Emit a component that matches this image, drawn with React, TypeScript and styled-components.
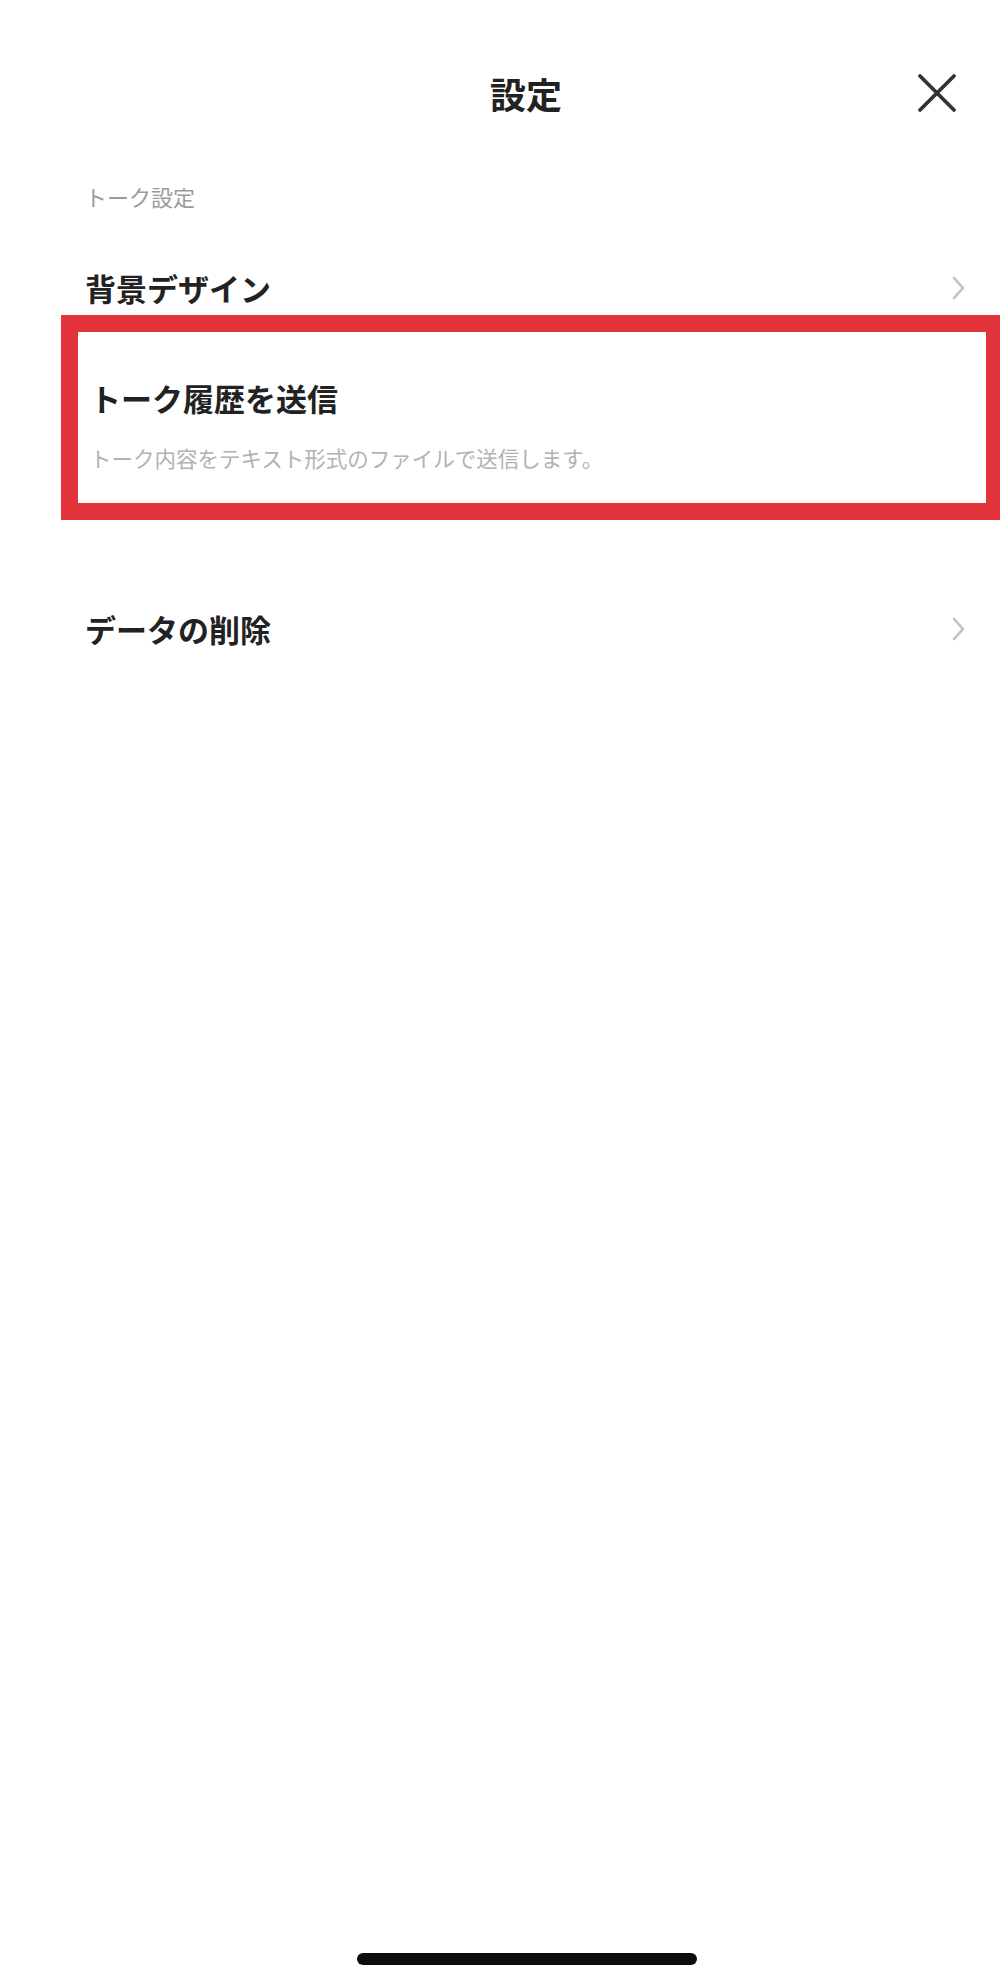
import React from "react";
import styled, { createGlobalStyle } from "styled-components";

const GlobalStyle = createGlobalStyle`
  html, body {
    margin: 0;
    padding: 0;
    background: #ffffff;
  }
  body {
    font-family: "Noto Sans CJK JP", "Noto Sans", sans-serif;
    color: #1f1f1f;
  }
`;

const Screen = styled.div`
  width: 1000px;
  height: 1983px;
  overflow: hidden;
  display: flex;
  flex-direction: column;
  background: #ffffff;
`;

const Header = styled.header`
  height: 186px;
  display: flex;
  align-items: center;
  padding: 0 43px 0 135px;
  box-sizing: border-box;
`;

const Title = styled.h1`
  flex: 1;
  margin: 0;
  text-align: center;
  font-size: 36px;
  font-weight: 700;
  line-height: 44px;
  color: #222222;
`;

const CloseButton = styled.button`
  width: 40px;
  height: 40px;
  padding: 0;
  border: none;
  background: transparent;
  display: flex;
  align-items: center;
  justify-content: center;
`;

const SectionLabel = styled.div`
  height: 20px;
  padding-left: 85px;
  font-size: 22px;
  line-height: 20px;
  color: #9a9a9a;
`;

const Row = styled.div<{ $top: number; $bottom?: number }>`
  margin-top: ${(p) => p.$top}px;
  height: 48px;
  margin-bottom: ${(p) => p.$bottom ?? 0}px;
  display: flex;
  align-items: center;
  justify-content: space-between;
  padding: 0 33px 0 85px;
  box-sizing: border-box;
`;

const RowLabel = styled.span`
  font-size: 31px;
  font-weight: 700;
  line-height: 40px;
  color: #222222;
`;

const Highlight = styled.div`
  margin-left: 61px;
  width: 942px;
  flex-shrink: 0;
  border: 17px solid #e3343b;
  box-sizing: border-box;
  padding: 46px 0 31px 12px;
  display: flex;
  flex-direction: column;
  gap: 26px;
`;

const HighlightTitle = styled.span`
  font-size: 31px;
  font-weight: 700;
  line-height: 40px;
  color: #222222;
`;

const HighlightDesc = styled.span`
  font-size: 21.5px;
  line-height: 28px;
  color: #b2b2b2;
  white-space: nowrap;
`;

const Spacer = styled.div`
  flex: 1;
`;

const HomeIndicator = styled.div`
  margin: 0 0 18px 357px;
  width: 340px;
  height: 12px;
  border-radius: 6px;
  background: #0d0d0d;
`;

const Chevron = () => (
  <svg width="18" height="30" viewBox="0 0 18 30" fill="none">
    <polyline
      points="5,5 14,15 5,25"
      stroke="#c0c0c0"
      strokeWidth="2.6"
      strokeLinecap="round"
      strokeLinejoin="round"
    />
  </svg>
);

const CloseIcon = () => (
  <svg width="40" height="40" viewBox="0 0 40 40" fill="none">
    <path
      d="M3 3 L37 37 M37 3 L3 37"
      stroke="#333333"
      strokeWidth="3.8"
      strokeLinecap="round"
    />
  </svg>
);

export default function App() {
  return (
    <>
      <GlobalStyle />
      <Screen>
        <Header>
          <Title>設定</Title>
          <CloseButton aria-label="閉じる">
            <CloseIcon />
          </CloseButton>
        </Header>
        <SectionLabel>トーク設定</SectionLabel>
        <Row $top={58} $bottom={3}>
          <RowLabel>背景デザイン</RowLabel>
          <Chevron />
        </Row>
        <Highlight>
          <HighlightTitle>トーク履歴を送信</HighlightTitle>
          <HighlightDesc>トーク内容をテキスト形式のファイルで送信します。</HighlightDesc>
        </Highlight>
        <Row $top={85}>
          <RowLabel>データの削除</RowLabel>
          <Chevron />
        </Row>
        <Spacer />
        <HomeIndicator />
      </Screen>
    </>
  );
}
